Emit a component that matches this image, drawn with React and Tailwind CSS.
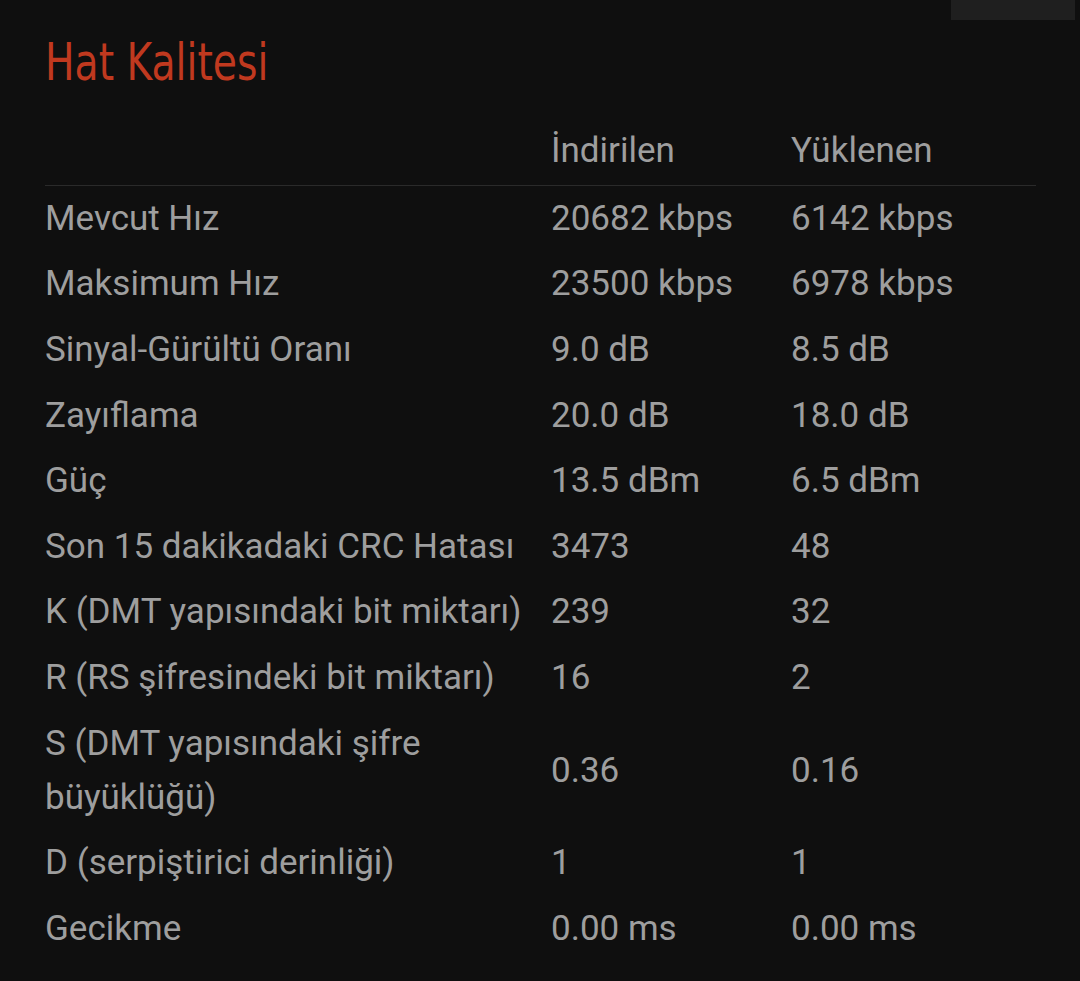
import React from "react";

const rows = [
  ["Mevcut Hız", "20682 kbps", "6142 kbps"],
  ["Maksimum Hız", "23500 kbps", "6978 kbps"],
  ["Sinyal-Gürültü Oranı", "9.0 dB", "8.5 dB"],
  ["Zayıflama", "20.0 dB", "18.0 dB"],
  ["Güç", "13.5 dBm", "6.5 dBm"],
  ["Son 15 dakikadaki CRC Hatası", "3473", "48"],
  ["K (DMT yapısındaki bit miktarı)", "239", "32"],
  ["R (RS şifresindeki bit miktarı)", "16", "2"],
  ["S (DMT yapısındaki şifre büyüklüğü)", "0.36", "0.16"],
  ["D (serpiştirici derinliği)", "1", "1"],
  ["Gecikme", "0.00 ms", "0.00 ms"],
];

export default function App() {
  return (
    <div className="relative w-[1080px] h-[981px] overflow-hidden bg-[#0f0f0f] text-[#9e9e9e]" style={{ fontFamily: "Roboto, 'Noto Sans', sans-serif" }}>
      <div className="absolute right-[5px] top-0 w-[124px] h-[20px] bg-[#1f1f1f]" />
      <div className="pl-[45px] pr-[44px] pt-[32px]">
        <h1 className="text-[#c0391f] text-[52px] leading-[60px] origin-left scale-x-[0.84] whitespace-nowrap" style={{ fontFamily: "'DejaVu Sans Condensed', 'Noto Sans', sans-serif" }}>
          Hat Kalitesi
        </h1>
        <div className="mt-[26px] grid grid-cols-[506px_240px_1fr] text-[35px] leading-[54px]">
          <div className="border-b border-[#2a2a2a] pt-[6px] pb-[7px]" />
          <div className="border-b border-[#2a2a2a] pt-[6px] pb-[7px]">İndirilen</div>
          <div className="border-b border-[#2a2a2a] pt-[6px] pb-[7px]">Yüklenen</div>
          {rows.map((r, i) => (
            <React.Fragment key={i}>
              <div className="py-[5.8px] pr-[4px] flex items-center">{r[0]}</div>
              <div className="py-[5.8px] flex items-center">{r[1]}</div>
              <div className="py-[5.8px] flex items-center">{r[2]}</div>
            </React.Fragment>
          ))}
        </div>
      </div>
    </div>
  );
}
